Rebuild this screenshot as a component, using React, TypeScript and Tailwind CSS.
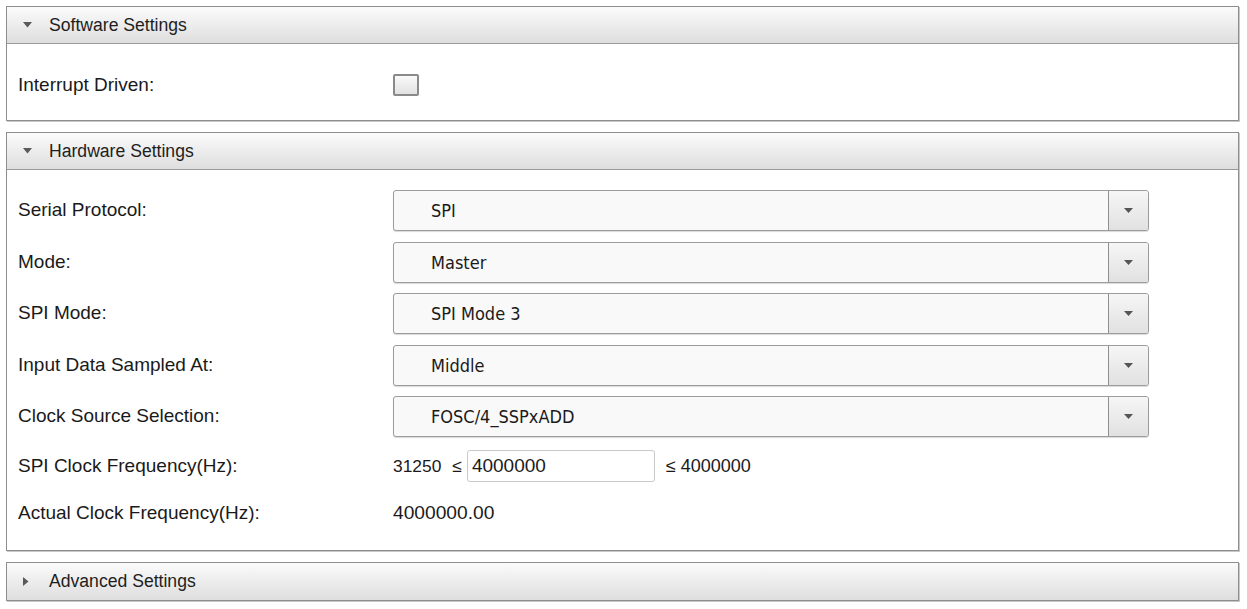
import React from "react";

const labelFont = { fontFamily: '"Liberation Sans", Arial, sans-serif' };
const selectFont = { fontFamily: '"DejaVu Sans Condensed", "DejaVu Sans", Tahoma, sans-serif' };

function Caret({ open }: { open: boolean }) {
  return open ? (
    <svg width="9" height="6" viewBox="0 0 9 6" className="shrink-0">
      <path d="M0 0 H9 L4.5 5.5 Z" fill="#5a5a5a" />
    </svg>
  ) : (
    <svg width="6" height="9" viewBox="0 0 6 9" className="shrink-0">
      <path d="M0 0 V9 L5.5 4.5 Z" fill="#5a5a5a" />
    </svg>
  );
}

function Panel({
  title,
  open,
  children,
}: {
  title: string;
  open: boolean;
  children?: React.ReactNode;
}) {
  return (
    <div className="border border-[#8e8e8e] bg-white shadow-[1px_1px_0_#c8c8c8]">
      <div
        className={`flex h-[37px] items-center bg-gradient-to-b from-[#fbfbfb] to-[#dedede] pl-[16px] ${
          open ? "border-b border-[#9a9a9a]" : ""
        }`}
      >
        <span className="flex w-[26px] justify-start">
          <Caret open={open} />
        </span>
        <span className="text-[17.6px] text-[#1e1e1e]" style={labelFont}>
          {title}
        </span>
      </div>
      {open && children}
    </div>
  );
}

function Label({ children }: { children: React.ReactNode }) {
  return (
    <div className="w-[375px] shrink-0 text-[19px] text-[#1a1a1a]" style={labelFont}>
      {children}
    </div>
  );
}

function Select({ value }: { value: string }) {
  return (
    <div className="flex h-[41px] w-[756px] overflow-hidden rounded-[3px] border border-[#9c9c9c] bg-[#f9f9f9] shadow-[0_1px_1px_rgba(0,0,0,0.15)]">
      <div
        className="flex flex-1 items-center pl-[37px] text-[18px] text-[#1a1a1a] font-stretch-condensed"
        style={selectFont}
      >
        {value}
      </div>
      <div className="flex w-[40px] items-center justify-center border-l border-[#8f8f8f] bg-gradient-to-b from-[#f6f6f6] to-[#e1e1e1]">
        <svg width="9" height="5" viewBox="0 0 9 5">
          <path d="M0 0 H9 L4.5 5 Z" fill="#555" />
        </svg>
      </div>
    </div>
  );
}

export default function App() {
  const selects = [
    ["Serial Protocol:", "SPI"],
    ["Mode:", "Master"],
    ["SPI Mode:", "SPI Mode 3"],
    ["Input Data Sampled At:", "Middle"],
    ["Clock Source Selection:", "FOSC/4_SSPxADD"],
  ];

  return (
    <div className="min-h-screen bg-white px-[6px] pt-[6px]">
      <div className="flex w-[1233px] flex-col gap-[11px]">
        <Panel title="Software Settings" open>
          <div className="flex h-[76px] items-center pl-[11px] pt-[6px]">
            <Label>Interrupt Driven:</Label>
            <div className="h-[22px] w-[26px] rounded-[2px] border-2 border-[#8a8a8a] bg-gradient-to-b from-[#fafafa] to-[#e2e2e2]" />
          </div>
        </Panel>

        <Panel title="Hardware Settings" open>
          <div className="flex h-[380px] flex-col pl-[11px] pt-[20px]">
            <div className="flex flex-col gap-[10.5px]">
              {selects.map(([label, value]) => (
                <div key={label} className="flex items-center">
                  <Label>{label}</Label>
                  <Select value={value} />
                </div>
              ))}
            </div>
            <div className="mt-[13px] flex h-[32px] items-center">
              <Label>SPI Clock Frequency(Hz):</Label>
              <div
                className="flex items-center text-[17.4px] text-[#1a1a1a]"
                style={labelFont}
              >
                <span>31250</span>
                <span className="ml-[11px] mr-[5px]">≤</span>
                <input
                  readOnly
                  value="4000000"
                  className="h-[32px] w-[188px] rounded-[3px] border border-[#c9c9c9] bg-white pl-[4px] text-[19px] text-[#1a1a1a] outline-none"
                  style={labelFont}
                />
                <span className="ml-[11px] text-[18px]">≤ 4000000</span>
              </div>
            </div>
            <div className="mt-[15px] flex h-[32px] items-center">
              <Label>Actual Clock Frequency(Hz):</Label>
              <span className="text-[19.2px] text-[#1a1a1a]" style={labelFont}>
                4000000.00
              </span>
            </div>
          </div>
        </Panel>

        <Panel title="Advanced Settings" open={false} />
      </div>
    </div>
  );
}
